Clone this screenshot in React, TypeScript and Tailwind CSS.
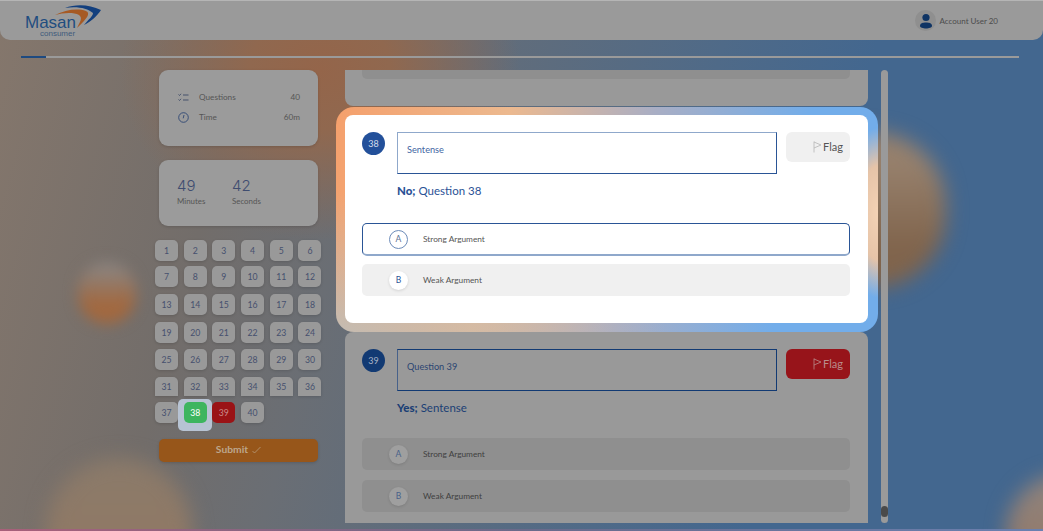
import React from "react";

const font = { fontFamily: '"Lato", "Open Sans", sans-serif' };

function FlagIcon({ color }: { color: string }) {
  return (
    <svg width="9" height="12" viewBox="0 0 9 12" fill="none" stroke={color} strokeWidth="0.8">
      <path d="M1 0.5V11.5" />
      <path d="M1 1L8 4L1 7" />
    </svg>
  );
}

function Option({ letter, text, selected, dim }: { letter: string; text: string; selected?: boolean; dim?: boolean }) {
  const box = selected
    ? "h-[33px] border border-[#2a5596] border-b-2 border-b-[#8fa8cb] bg-white pl-[26px]"
    : dim
      ? "h-[32px] bg-[#8f8f8f] pl-[27px]"
      : "h-[32px] bg-[#f0f0f0] pl-[27px]";
  const circle = selected
    ? "border border-[#6d8cb9] bg-white text-[#5a6f92]"
    : dim
      ? "bg-[#9f9f9f] shadow-[0_1px_3px_rgba(0,0,0,0.12)] text-[#47618a]"
      : "bg-white shadow-[0_1px_3px_rgba(0,0,0,0.12)] text-[#2a5596]";
  return (
    <div className={`flex items-center rounded-[5px] ${box}`}>
      <div className={`flex h-[19px] w-[19px] items-center justify-center rounded-full text-[8.5px] ${circle}`}>{letter}</div>
      <div className={`ml-[15px] text-[8.3px] ${dim ? "text-[#3f3f3f]" : "text-[#555555]"}`}>{text}</div>
    </div>
  );
}

function Question(props: {
  n: number;
  prompt: string;
  bold: string;
  answer: string;
  dim?: boolean;
  selected?: boolean;
  flagged?: boolean;
}) {
  const { n, prompt, bold, answer, dim, selected, flagged } = props;
  return (
    <div className="flex flex-col pl-[17px] pr-[18px] pt-[17px]">
      <div className="flex items-start">
        <div className={`flex h-[23px] w-[23px] shrink-0 items-center justify-center rounded-full text-[9px] ${dim ? "bg-[#123a73] text-[#a9b4c6]" : "bg-[#23509a] text-[#d5deec]"}`}>
          {n}
        </div>
        <div
          className={`ml-[12px] h-[42px] w-[380px] border-[1.5px] pl-[9px] pt-[10px] text-[9.2px] ${
            dim
              ? "border-[#123a73] border-l-[#47618a] text-[#2b4572]"
              : "border-[#2a5596] border-t-[#8fa8cb] border-l-[#8fa8cb] text-[#3f66a3]"
          }`}
        >
          {prompt}
        </div>
        <div
          className={`ml-[9px] flex h-[30px] w-[64px] items-center justify-end gap-px rounded-[6px] pr-[7px] text-[11px] ${
            flagged ? "bg-[#97141a] text-[#b98c8c]" : "bg-[#f0f0f0] text-[#555555]"
          }`}
        >
          <FlagIcon color={flagged ? "#b98c8c" : "#b5b5b5"} />
          Flag
        </div>
      </div>
      <div className={`ml-[35px] mt-[7px] h-[20px] text-[11.5px] leading-[20px] ${dim ? "text-[#1b3f75]" : "text-[#2b5296]"}`}>
        <span className="font-black">{bold}</span> {answer}
      </div>
      <div className={`flex flex-col ${dim ? "mt-[20px] gap-[10px]" : "mt-[22px] gap-[8px]"}`}>
        <Option letter="A" text="Strong Argument" selected={selected} dim={dim} />
        <Option letter="B" text="Weak Argument" dim={dim} />
      </div>
    </div>
  );
}

const rows = [
  { h: "h-[21px]", mb: "mb-[5px]", nums: [1, 2, 3, 4, 5, 6] },
  { h: "h-[21px]", mb: "mb-[7px]", nums: [7, 8, 9, 10, 11, 12] },
  { h: "h-[21px]", mb: "mb-[7px]", nums: [13, 14, 15, 16, 17, 18] },
  { h: "h-[21px]", mb: "mb-[6px]", nums: [19, 20, 21, 22, 23, 24] },
  { h: "h-[21px]", mb: "mb-[7px]", nums: [25, 26, 27, 28, 29, 30] },
  { h: "h-[19px]", mb: "mb-[6px]", nums: [31, 32, 33, 34, 35, 36] },
  { h: "h-[21px]", mb: "", nums: [37, 38, 39, 40] },
];

function Cell({ n, h }: { n: number; h: string }) {
  if (n === 38) {
    return (
      <div className="relative h-[21px] w-[23px]">
        <div className="absolute -bottom-[8px] -left-[6px] -right-[5px] -top-[3px] rounded-[5px] bg-[#b7c3d3]" />
        <div className="absolute inset-0 flex items-center justify-center rounded-[5px] bg-[#3db55f] text-[8.7px] text-white">38</div>
      </div>
    );
  }
  const color = n === 39 ? "bg-[#9a1316] text-[#c98a8a]" : "bg-[#999999] text-[#46506e] shadow-[0_1px_3px_rgba(0,0,0,0.15)]";
  const round = h === "h-[19px]" ? "rounded-t-[5px]" : "rounded-[5px]";
  return <div className={`flex w-[23px] items-center justify-center text-[8.7px] ${h} ${round} ${color}`}>{n}</div>;
}

function Background() {
  return (
    <div className="absolute inset-0 overflow-hidden bg-[linear-gradient(105deg,#85776c_0%,#726d6a_22%,#6a6e74_34%,#4f6a88_62%,#43678f_75%,#43678f_100%)]">
      <div className="absolute -top-[100px] left-[120px] h-[340px] w-[400px] rounded-full bg-[radial-gradient(closest-side,#94654a_0%,#90684f_35%,rgba(144,104,79,0)_100%)]" />
      <div className="absolute left-[78px] top-[262px] h-[62px] w-[58px] rounded-full bg-[linear-gradient(180deg,#8b837e_10%,#a2683f_70%)] blur-[7px]" />
      <div className="absolute left-[46px] top-[458px] h-[170px] w-[146px] rounded-full bg-[linear-gradient(180deg,#8a7a6a,#967860)] blur-[10px]" />
      <div className="absolute left-[800px] top-[132px] h-[156px] w-[146px] rounded-full bg-[linear-gradient(180deg,#96806c_20%,#80644c_75%)] blur-[10px]" />
      <div className="absolute left-[1006px] top-[474px] h-[120px] w-[120px] rounded-full bg-[linear-gradient(180deg,#8f847e,#95745f)] blur-[10px]" />
    </div>
  );
}

const arial = { fontFamily: '"Liberation Sans", sans-serif' };

export default function App() {
  return (
    <div className="relative flex h-[531px] w-full flex-col overflow-hidden text-[#555555]" style={font}>
      <Background />

      <header className="relative flex h-[40px] shrink-0 items-center justify-between rounded-b-[10px] border-t border-[#b5b5b5] bg-[#9a9a9a] pl-[25px] pr-[45px]">
        <div className="relative h-[38px] w-[80px]">
          <div className="absolute left-0 top-[14px] text-[17px] leading-[13px] text-[#1f4d80]" style={arial}>
            Masan
          </div>
          <div className="absolute left-[15px] top-[28px] text-[8px] leading-[7px] text-[#3f5b7c]" style={arial}>
            consumer
          </div>
          <svg className="absolute left-[26px] top-[3px]" width="52" height="28" viewBox="0 0 52 28">
            <path d="M14 3C24 -1 38 -1 50 5C46 11 41 16 33 20C38 14 42 11 42 8C36 3 26 1 14 3Z" fill="#123f7e" />
            <path d="M4 10C14 5 26 3 35 6C39 8 38 12 26 23C29 17 32 13 28 10C22 7 12 8 4 10Z" fill="#a65a24" />
          </svg>
        </div>
        <div className="flex items-center gap-[3px]">
          <div className="flex h-[21px] w-[21px] items-center justify-center rounded-full bg-[#8f8f8f]">
            <svg width="14" height="16" viewBox="0 0 14 16" fill="#0f3464">
              <circle cx="7" cy="4.5" r="3.6" />
              <path d="M1 13C1 10 4 9.5 7 9.5C10 9.5 13 10 13 13C13 14.5 10 15.5 7 15.5C4 15.5 1 14.5 1 13Z" />
            </svg>
          </div>
          <span className="text-[8px] text-[#4c4c4c]">Account User 20</span>
        </div>
      </header>

      <div className="relative ml-[21px] mr-[24px] mt-[16px] h-[2px] shrink-0 bg-[#9a9a9a]">
        <div className="h-full w-[25px] bg-[#1e4a80]" />
      </div>

      <main className="relative mt-[12px] flex h-[453px] shrink-0 items-start pl-[159px]">
        <aside className="flex w-[159px] shrink-0 flex-col">
          <div className="flex h-[76px] flex-col justify-center gap-[9px] rounded-[9px] bg-[#9b9b9b] pb-[2px] pl-[19px] pr-[18px] text-[8.2px] text-[#555] shadow-[0_1px_3px_rgba(0,0,0,0.15)]">
            <div className="flex h-[11px] items-center">
              <svg width="11" height="9" viewBox="0 0 11 9" fill="none" stroke="#3d4a66" strokeWidth="0.9">
                <path d="M0.5 1.5L1.5 2.5L3 0.8M0.5 6.5L1.5 7.5L3 5.8M5 2H10.5M5 7H10.5" />
              </svg>
              <span className="ml-[10px]">Questions</span>
              <span className="ml-auto">40</span>
            </div>
            <div className="flex h-[11px] items-center">
              <svg width="11" height="11" viewBox="0 0 11 11" fill="none" stroke="#2e4674" strokeWidth="0.9">
                <circle cx="5.5" cy="5.5" r="4.8" />
                <path d="M6 3L5.2 6.3" />
              </svg>
              <span className="ml-[10px]">Time</span>
              <span className="ml-auto">60m</span>
            </div>
          </div>

          <div className="mt-[14px] flex h-[66px] items-center rounded-[9px] bg-[#9b9b9b] pb-[2px] pl-[18px] shadow-[0_1px_3px_rgba(0,0,0,0.15)]">
            <div className="flex w-[55px] flex-col">
              <span className="text-[15px] font-light leading-[18px] text-[#3f4d70]" style={{ fontFamily: '"Inter", sans-serif' }}>49</span>
              <span className="mt-[1px] text-[7.9px] leading-[11px]">Minutes</span>
            </div>
            <div className="flex flex-col">
              <span className="text-[15px] font-light leading-[18px] text-[#3f4d70]" style={{ fontFamily: '"Inter", sans-serif' }}>42</span>
              <span className="mt-[1px] text-[7.9px] leading-[11px]">Seconds</span>
            </div>
          </div>

          <div className="-mx-[4px] mt-[14px] flex flex-col">
            {rows.map((r, i) => (
              <div key={i} className={`flex gap-[5.7px] ${r.mb}`}>
                {r.nums.map((n) => (
                  <Cell key={n} n={n} h={r.h} />
                ))}
              </div>
            ))}
          </div>

          <button className="relative mt-[16px] flex h-[23px] w-full items-center justify-center gap-[4px] rounded-[5px] bg-[#97561a] pb-px text-[10.3px] font-bold text-[#bda68c] shadow-[0_1px_3px_rgba(0,0,0,0.15)]">
            Submit
            <svg width="9" height="8" viewBox="0 0 9 8" fill="none" stroke="#bda68c" strokeWidth="0.7">
              <path d="M0.5 5L2.5 7L8.5 1" />
            </svg>
          </button>
        </aside>

        <div className="ml-[18px] flex h-[453px] w-[542px] shrink-0 flex-col overflow-hidden pl-[9px] pr-[10px]">
          <div className="h-[36px] shrink-0 rounded-b-[8px] bg-[#999999] pl-[17px] pr-[18px]">
            <div className="h-[9px] rounded-b-[5px] bg-[#8f8f8f]" />
          </div>
          <div className="-ml-[9px] -mr-[10px] mt-px shrink-0 rounded-[18px] bg-[radial-gradient(ellipse_34px_85px_at_100%_47%,#f3d2b5_0%,#e6c4a8_55%,rgba(230,196,168,0)_100%),radial-gradient(ellipse_330px_140px_at_0%_100%,#c4bcb2_0%,rgba(196,188,178,0)_100%),linear-gradient(100deg,#f5a06c_0%,#ecb98f_30%,#a9aec4_55%,#72adea_82%)] pb-[9px] pl-[9px] pr-[10px] pt-[8px]">
            <div className="h-[208px] rounded-[8px] bg-white">
              <Question n={38} prompt="Sentense" bold="No;" answer="Question 38" selected />
            </div>
          </div>
          <div className="h-[200px] shrink-0 rounded-t-[8px] bg-[#999999]">
            <Question n={39} prompt="Question 39" bold="Yes;" answer="Sentense" dim flagged />
          </div>
        </div>

        <div className="relative ml-[3px] h-[453px] w-[7px] shrink-0 rounded-full bg-[#9a9a9a]">
          <div className="absolute bottom-[6px] left-0 h-[11px] w-[7px] rounded-full bg-[#4a4a4a]" />
        </div>
      </main>

      <div className="absolute bottom-0 left-0 h-[2px] w-full bg-[linear-gradient(90deg,#a8607a,#6a6a8a_50%,#6a80b0)]" />
    </div>
  );
}
